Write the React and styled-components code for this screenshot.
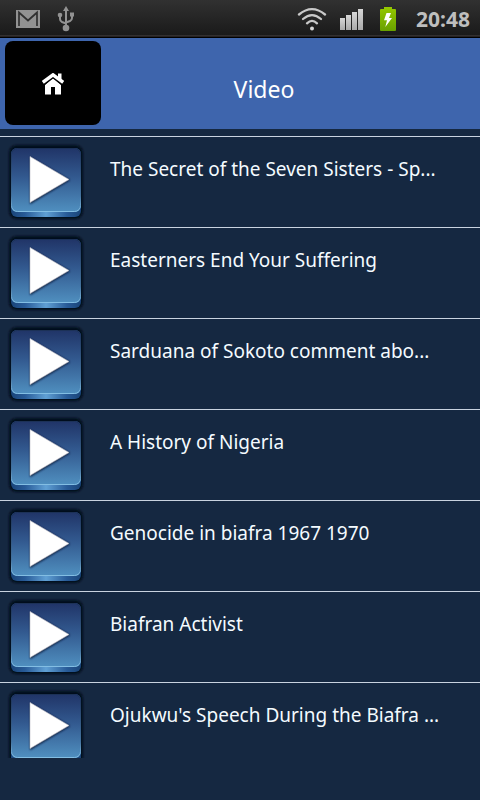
import React from "react";
import styled, { createGlobalStyle } from "styled-components";

const GlobalStyle = createGlobalStyle`
  * { box-sizing: border-box; }
  body {
    margin: 0;
    background: #152841;
    color: #fff;
    font-family: "Noto Sans", "Open Sans", sans-serif;
  }
`;

const Screen = styled.div`
  display: flex;
  flex-direction: column;
  height: 100vh;
  padding-bottom: 42px;
  overflow: hidden;
  background: #152841;
`;

const StatusBar = styled.div`
  display: flex;
  flex: none;
  align-items: center;
  justify-content: space-between;
  height: 38px;
  padding: 0 10px 0 16px;
  background: linear-gradient(#313131, #1a1a1a 35px, #4a4444 36px, #000 37px);
`;

const StatusGroup = styled.div`
  display: flex;
  align-items: center;
  gap: ${(p) => p.$gap}px;
`;

const Clock = styled.time`
  margin-left: 6px;
  color: #bebebe;
  font-size: 21px;
  font-weight: 700;
  line-height: 38px;
`;

const Header = styled.header`
  display: grid;
  flex: none;
  grid-template-columns: 96px 1fr 48px;
  align-items: center;
  height: 91px;
  padding: 0 5px;
  background: #3e65ad;
`;

const HomeButton = styled.button`
  display: grid;
  place-items: center;
  align-self: start;
  height: 84px;
  margin-top: 3px;
  padding: 2px 0 0;
  border: 0;
  border-radius: 8px;
  background: #000;
  color: #fff;
`;

const Title = styled.h1`
  margin: 10px 0 0;
  font-size: 23px;
  font-weight: 400;
  line-height: 32px;
  text-align: center;
`;

const VideoList = styled.ul`
  flex: 1;
  min-height: 0;
  margin: 7px 0 0;
  padding: 0;
  overflow: hidden;
  list-style: none;
`;

const VideoRow = styled.li`
  height: 91px;
  border-top: 1px solid #c9d3e0;
`;

const VideoLink = styled.a`
  display: flex;
  align-items: flex-start;
  gap: 22px;
  padding: 5px 24px 0 4px;
  color: #f4fbff;
  text-decoration: none;
`;

const VideoTitle = styled.span`
  padding-top: 13px;
  font-size: 19px;
  line-height: 28px;
  white-space: nowrap;
`;

const videos = [
  "The Secret of the Seven Sisters - Sp...",
  "Easterners End Your Suffering",
  "Sarduana of Sokoto comment abo...",
  "A History of Nigeria",
  "Genocide in biafra 1967 1970",
  "Biafran Activist",
  "Ojukwu's Speech During the Biafra ...",
];

const MailIcon = () => (
  <svg width="24" height="18" viewBox="0 0 24 18" aria-hidden="true">
    <rect width="24" height="18" fill="#929292" />
    <path d="M3 16V2.5L12 10.5L21 2.5V16" fill="none" stroke="#303030" strokeWidth="1.7" />
  </svg>
);

const UsbIcon = () => (
  <svg width="18" height="26" viewBox="0 0 18 26" aria-hidden="true">
    <g fill="none" stroke="#929292" strokeWidth="2">
      <path d="M9 3V23M3 10V13Q3 15 5 16L9 17.5M15 9V12Q15 14 13 15L9 16.5" />
    </g>
    <g fill="#929292">
      <path d="M9 0L12 5H6Z" />
      <circle cx="3" cy="9" r="2.3" />
      <path d="M13 6.5H17V10.5H13Z" />
      <circle cx="9" cy="22" r="3.3" />
    </g>
  </svg>
);

const WifiIcon = () => (
  <svg width="30" height="24" viewBox="0 0 30 24" aria-hidden="true">
    <g fill="none" stroke="#c9c9c9" strokeWidth="2.3" strokeLinecap="round">
      <path d="M2 7.5Q15 -3.2 28 7.5" />
      <path d="M6 12Q15 4.2 24 12" />
      <path d="M10 16.3Q15 11.5 20 16.3" />
    </g>
    <circle cx="15" cy="21.4" r="2" fill="#d8d8d8" />
  </svg>
);

const SignalIcon = () => (
  <svg width="26" height="22" viewBox="0 0 26 22" aria-hidden="true">
    <defs>
      <linearGradient id="bars" x2="0" y2="1">
        <stop stopColor="#d6d6d6" />
        <stop offset="1" stopColor="#a9a9a9" />
      </linearGradient>
    </defs>
    <g fill="url(#bars)">
      <rect y="10" width="5" height="12" />
      <rect x="6" y="7" width="5" height="15" />
      <rect x="12" y="4" width="5" height="18" />
      <rect x="18" y="1" width="5" height="21" />
    </g>
  </svg>
);

const BatteryIcon = () => (
  <svg width="18" height="24" viewBox="0 0 18 24" aria-hidden="true">
    <defs>
      <linearGradient id="battery" x2="0" y2="1">
        <stop stopColor="#95c800" />
        <stop offset="1" stopColor="#68a000" />
      </linearGradient>
    </defs>
    <path d="M5 0H13V2H16Q17 2 17 3V23Q17 24 16 24H2Q1 24 1 23V3Q1 2 2 2H5Z" fill="url(#battery)" />
    <path d="M7.5 6H12L10 11H13L6.3 20L8 13.3H5Z" fill="#fff" />
  </svg>
);

const HomeIcon = () => (
  <svg width="22" height="22" viewBox="0 0 22 22" aria-hidden="true">
    <path d="M16 .5H19.5V8L16 5Z" fill="#fff" />
    <path d="M3 12L11 5L19 12V21.5H13V14H9V21.5H3Z" fill="#fff" />
    <path d="M.8 11.8L11 3.9L21.2 11.8" fill="none" stroke="#000" strokeWidth="2.5" />
    <path d="M.8 9.3L11 1.8L21.2 9.3" fill="none" stroke="#fff" strokeWidth="3.4" />
  </svg>
);

const PlayIcon = () => (
  <svg width="84" height="80" viewBox="0 0 84 80" aria-hidden="true">
    <defs>
      <linearGradient id="face" x2="0" y2="1">
        <stop stopColor="#203467" />
        <stop offset=".45" stopColor="#32598f" />
        <stop offset="1" stopColor="#5090c0" />
      </linearGradient>
      <linearGradient id="lip">
        <stop stopColor="#194478" />
        <stop offset=".2" stopColor="#285b98" />
        <stop offset=".5" stopColor="#60a0d4" />
        <stop offset=".8" stopColor="#285b98" />
        <stop offset="1" stopColor="#194478" />
      </linearGradient>
      <linearGradient id="rim" x2="0" y2="1">
        <stop stopColor="#1c3157" />
        <stop offset=".75" stopColor="#44739e" />
        <stop offset="1" stopColor="#83bee3" />
      </linearGradient>
      <filter id="soft" x="-20%" y="-20%" width="140%" height="140%">
        <feGaussianBlur stdDeviation="1.3" />
      </filter>
    </defs>
    <rect x="5" y="3" width="74" height="74" rx="8" fill="#030c1b" filter="url(#soft)" />
    <rect x="7" y="6" width="70" height="69" rx="6" fill="url(#lip)" />
    <rect x="7" y="6" width="70" height="64" rx="6" fill="url(#face)" />
    <rect x="7.5" y="6.5" width="69" height="63" rx="6" fill="none" stroke="url(#rim)" />
    <path d="M26 15L66 38L26 62Z" fill="#0b1c38" filter="url(#soft)" />
    <path d="M26 14.5L65 37.5L26 60.5Z" fill="#fff" stroke="#bdbcc6" strokeWidth=".6" />
  </svg>
);

export default function App() {
  return (
    <>
      <GlobalStyle />
      <Screen>
        <StatusBar>
          <StatusGroup $gap={17}>
            <MailIcon />
            <UsbIcon />
          </StatusGroup>
          <StatusGroup $gap={13}>
            <WifiIcon />
            <SignalIcon />
            <BatteryIcon />
            <Clock>20:48</Clock>
          </StatusGroup>
        </StatusBar>
        <Header>
          <HomeButton type="button" aria-label="Home">
            <HomeIcon />
          </HomeButton>
          <Title>Video</Title>
        </Header>
        <VideoList>
          {videos.map((title) => (
            <VideoRow key={title}>
              <VideoLink href="#">
                <PlayIcon />
                <VideoTitle>{title}</VideoTitle>
              </VideoLink>
            </VideoRow>
          ))}
        </VideoList>
      </Screen>
    </>
  );
}
